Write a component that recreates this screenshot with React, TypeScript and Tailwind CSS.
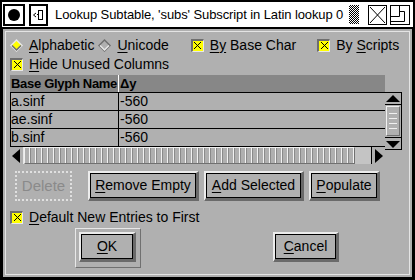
import React from "react";

const F = { fontFamily: '"Liberation Sans", Arial, sans-serif' };

function Check({ className = "" }: { className?: string }) {
  return (
    <div
      className={`w-[13px] h-[13px] border-t-2 border-l-2 border-[#6e6e6e] border-b border-r border-b-[#e8e8e8] border-r-[#e8e8e8] bg-[#ffff00] flex items-center justify-center shrink-0 ${className}`}
    >
      <svg width="9" height="9" viewBox="0 0 9 9">
        <path d="M1 1L8 8M8 1L1 8" stroke="#000" strokeWidth="1" />
      </svg>
    </div>
  );
}

function Radio({ on }: { on: boolean }) {
  return (
    <svg width="13" height="13" viewBox="0 0 13 13" className="shrink-0">
      <polygon points="6.5,0 13,6.5 6.5,13 0,6.5" fill={on ? "#e8e8e8" : "#6e6e6e"} />
      <polygon points="6.5,2 11,6.5 6.5,11 2,6.5" fill={on ? "#ffff00" : "#b0b0b0"} />
      <polyline points="2,6.5 6.5,11 11,6.5" fill="none" stroke={on ? "#6e6e6e" : "#e8e8e8"} strokeWidth="1.5" />
    </svg>
  );
}

function U({ c }: { c: string }) {
  return <span className="underline underline-offset-2">{c}</span>;
}

function Btn({ w, children, disabled }: { w: string; children: React.ReactNode; disabled?: boolean }) {
  if (disabled) {
    return (
      <div className={`${w} h-[30px] border-2 border-dotted border-[#e0e0e0] flex items-center justify-center text-[#8a8a8a] text-[15px]`}>
        {children}
      </div>
    );
  }
  return (
    <div className={`${w} h-[30px] border-t-2 border-l-2 border-[#ececec] border-b-[3px] border-r-[3px] border-b-[#6a6a6a] border-r-[#6a6a6a] flex`}>
      <div className="flex-1 border border-black flex items-center justify-center text-[14px] text-black">
        {children}
      </div>
    </div>
  );
}

export default function App() {
  const rows = ["a.sinf", "ae.sinf", "b.sinf"];
  return (
    <div className="w-[415px] h-[280px] bg-black flex flex-col overflow-hidden" style={F}>
      {/* title bar */}
      <div className="h-[25px] mx-[2px] mt-[2px] bg-white flex items-center relative">
        <div className="ml-[1px] w-[22px] h-[22px] border-2 border-black flex items-center justify-center">
          <div className="w-[12px] h-[12px] rounded-full bg-black" />
        </div>
        <div className="ml-[4px] w-[19px] h-[22px] border-2 border-black flex items-center justify-center">
          <svg width="13" height="12" viewBox="0 0 13 12">
            <path d="M4 4L1.5 6L4 8" fill="none" stroke="#000" strokeWidth="1" />
            <rect x="6.5" y="1.5" width="4" height="9" fill="none" stroke="#000" strokeWidth="1" />
            <rect x="5" y="5" width="1" height="1" fill="#000" />
          </svg>
        </div>
        <div className="ml-[7px] text-[13px] text-black whitespace-nowrap tracking-[-0.1px]">
          Lookup Subtable, 'subs' Subscript in Latin lookup 0
        </div>
        <div
          className="absolute left-[347px] top-[3px] w-[10px] h-[19px]"
          style={{
            backgroundImage: "repeating-conic-gradient(#000 0% 25%, #fff 0% 50%)",
            backgroundSize: "2px 2px",
          }}
        />
        <div className="absolute left-[366px] top-[3px] w-[19px] h-[20px] border border-black flex items-center justify-center">
          <svg width="17" height="18" viewBox="0 0 17 18">
            <path d="M1 1L16 17M16 1L1 17" stroke="#000" strokeWidth="1" />
          </svg>
        </div>
        <div className="absolute left-[388px] top-[3px] w-[20px] h-[20px] border border-black">
          <svg width="18" height="18" viewBox="0 0 18 18">
            <path d="M8.5 0V10.5H0M8.5 5.5H13.5V15.5H0" fill="none" stroke="#000" strokeWidth="1" />
          </svg>
        </div>
      </div>
      <div className="h-[2px] bg-black" />
      {/* body */}
      <div className="flex-1 mx-[3px] mb-[3px] bg-[#b0b0b0] pt-[2px] px-[2px] pb-[2px] flex">
        <div className="flex-1 border border-[#e4e4e4] flex flex-col text-black text-[14px]">
          {/* row 1 */}
          <div className="mt-[4px] h-[18px] flex items-center pl-[4px] whitespace-nowrap">
            <Radio on={true} />
            <span className="ml-[6px]"><U c="A" />lphabetic</span>
            <span className="ml-[4px]"><Radio on={false} /></span>
            <span className="ml-[6px]"><U c="U" />nicode</span>
            <Check className="ml-[22px]" />
            <span className="ml-[6px]"><U c="B" /><U c="y" /> Base Char</span>
            <Check className="ml-[21px]" />
            <span className="ml-[6px]">By <U c="S" />cripts</span>
          </div>
          {/* row 2 */}
          <div className="mt-[1px] h-[18px] flex items-center pl-[4px] whitespace-nowrap">
            <Check />
            <span className="ml-[6px]"><U c="H" />ide Unused Columns</span>
          </div>
          {/* table */}
          <div className="mt-[2px] ml-[4px] flex">
            <div className="w-[375px] flex flex-col">
              <div className="h-[17px] bg-[#878787] flex items-center text-[13px] font-bold whitespace-nowrap">
                <div className="w-[109px] pl-[1px] border-r border-white h-full flex items-center tracking-[-0.3px]">Base Glyph Name</div>
                <div className="pl-[1px]">Δy</div>
              </div>
              {rows.map((r) => (
                <div key={r} className="h-[18px] border-t border-l border-black flex items-center">
                  <div className="w-[108px] h-full border-r border-black flex items-center">{r}</div>
                  <div className="pl-[1px]">-560</div>
                </div>
              ))}
              {/* h scrollbar */}
              <div className="h-[18px] border-t border-black flex items-center bg-[#b0b0b0]">
                <svg width="13" height="16" viewBox="0 0 13 16" className="shrink-0">
                  <polygon points="2,8 10,1 10,15" fill="#000" />
                </svg>
                <div className="flex-1 h-full flex bg-[#c4c4c4] border-l border-[#e8e8e8]">
                  <div
                    className="w-[331px] h-full border-t border-l border-[#f0f0f0] border-b border-r border-b-[#707070] border-r-[#707070]"
                    style={{
                      backgroundImage:
                        "repeating-linear-gradient(90deg, #b0b0b0 0px, #b0b0b0 4px, #f2f2f2 4px, #f2f2f2 5px, #8a8a8a 5px, #8a8a8a 6px)",
                    }}
                  />
                  <div className="flex-1 border-r border-black" />
                </div>
                <svg width="13" height="16" viewBox="0 0 13 16" className="shrink-0">
                  <polygon points="3,1 11,8 3,15" fill="#000" />
                </svg>
              </div>
            </div>
            {/* v scrollbar */}
            <div className="w-[17px] flex flex-col">
              <div className="h-[17px]" />
              <div className="h-[58px] border border-black border-l-0 flex flex-col bg-[#b0b0b0]">
                <div className="h-[12px] flex items-center justify-center border-b border-black">
                  <svg width="14" height="8" viewBox="0 0 14 8">
                    <polygon points="7,0 14,7 0,7" fill="#000" />
                  </svg>
                </div>
                <div className="flex-1 mx-[1px] my-[1px] border border-[#f0f0f0] border-b-[#707070] border-r-[#707070] flex flex-col justify-center gap-[4px] px-[2px]">
                  <div className="h-[1px] bg-[#f0f0f0]" />
                  <div className="h-[1px] bg-[#f0f0f0]" />
                  <div className="h-[1px] bg-[#f0f0f0]" />
                  <div className="h-[1px] bg-[#f0f0f0]" />
                </div>
                <div className="h-[12px] flex items-center justify-center border-t border-black">
                  <svg width="14" height="8" viewBox="0 0 14 8">
                    <polygon points="0,1 14,1 7,8" fill="#000" />
                  </svg>
                </div>
              </div>
            </div>
          </div>
          {/* buttons */}
          <div className="mt-[7px] ml-[9px] flex items-center">
            <Btn w="w-[57px]" disabled>Delete</Btn>
            <div className="ml-[16px]"><Btn w="w-[111px]"><span><U c="R" />emove Empty</span></Btn></div>
            <div className="ml-[5px]"><Btn w="w-[100px]"><span><U c="A" />dd Selected</span></Btn></div>
            <div className="ml-[5px]"><Btn w="w-[71px]"><span><U c="P" />opulate</span></Btn></div>
          </div>
          {/* default check */}
          <div className="mt-[7px] h-[18px] flex items-center pl-[4px] whitespace-nowrap">
            <Check />
            <span className="ml-[6px]"><U c="D" />efault New Entries to First</span>
          </div>
          {/* OK / Cancel */}
          <div className="mt-[2px] flex items-start">
            <div className="ml-[69px] w-[66px] h-[40px] border border-[#e8e8e8] border-b-[#707070] border-r-[#707070] pt-[3px] pl-[3px]">
              <Btn w="w-[57px]"><span><U c="O" />K</span></Btn>
            </div>
            <div className="ml-[132px] mt-[4px]">
              <Btn w="w-[66px]"><span><U c="C" />ancel</span></Btn>
            </div>
          </div>
        </div>
      </div>
    </div>
  );
}
